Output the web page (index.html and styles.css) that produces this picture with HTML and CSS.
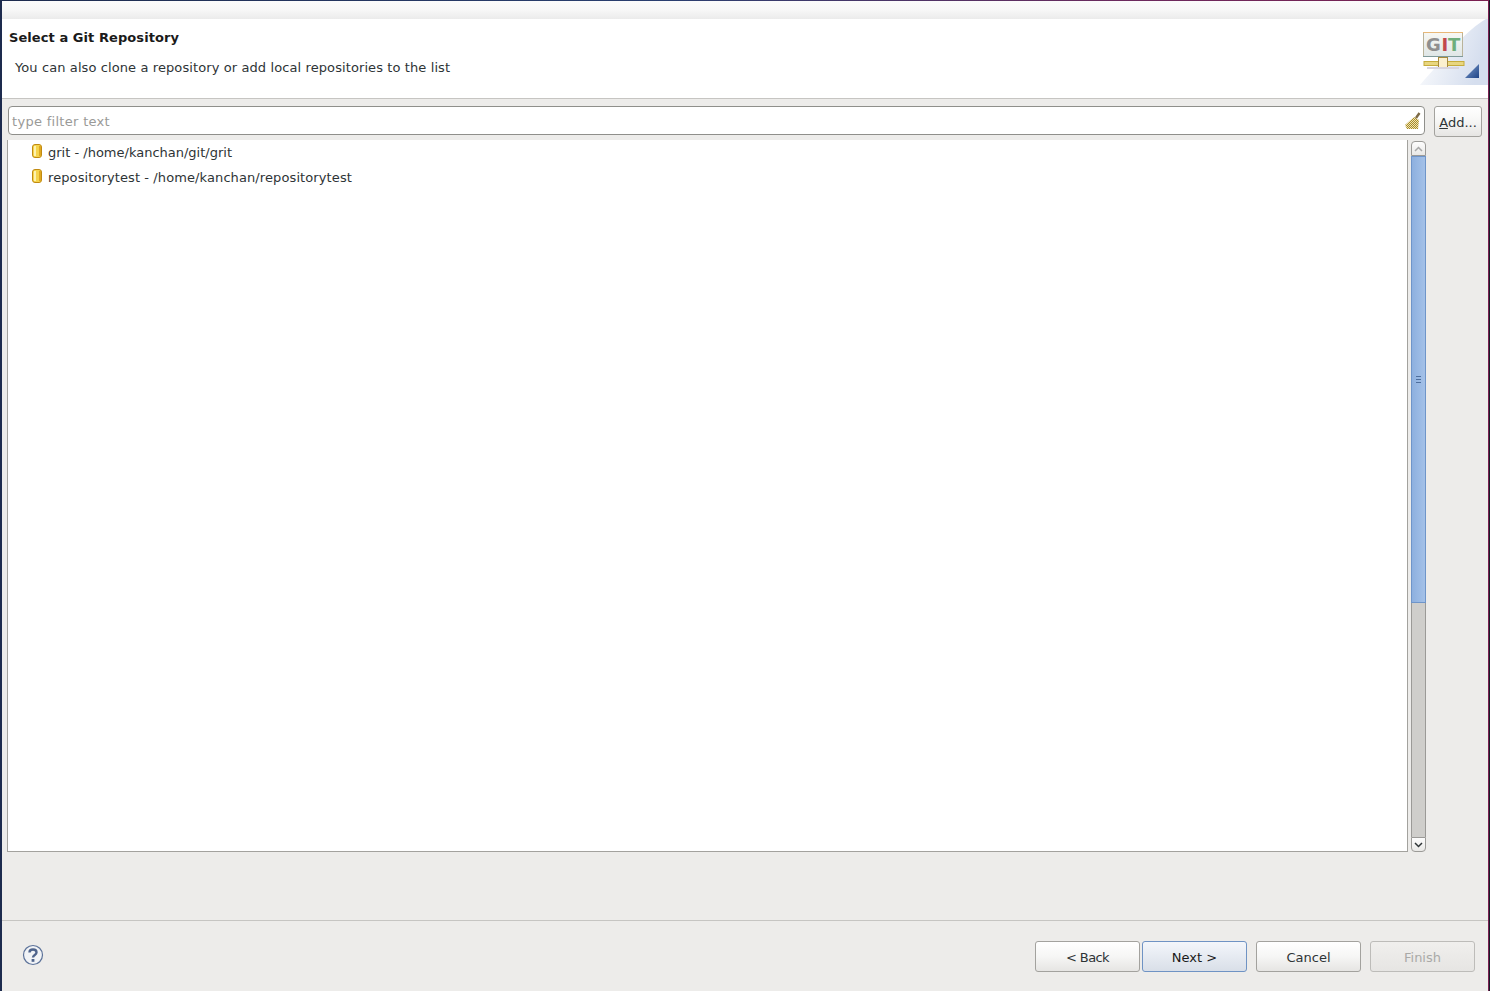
FILE: index.html
```html
<!DOCTYPE html>
<html lang="en">
<head>
<meta charset="utf-8">
<title>Select a Git Repository</title>
<link rel="stylesheet" href="styles.css">
</head>
<body>
<div class="window">
  <div class="strip"></div>
  <header class="banner">
    <div class="banner-text">
      <h1 class="title">Select a Git Repository</h1>
      <p class="subtitle">You can also clone a repository or add local repositories to the list</p>
    </div>
    <div class="banner-art">
      <svg class="art-svg" width="90" height="66" viewBox="0 0 90 66">
        <defs>
          <linearGradient id="wash" x1="0" y1="0" x2="1" y2="0.3">
            <stop offset="0" stop-color="#ffffff"/>
            <stop offset="1" stop-color="#d5deee"/>
          </linearGradient>
          <linearGradient id="tri" x1="0" y1="0" x2="1" y2="1">
            <stop offset="0" stop-color="#7f9fce"/>
            <stop offset="1" stop-color="#1f4487"/>
          </linearGradient>
          <linearGradient id="panel" x1="0" y1="0" x2="0" y2="1">
            <stop offset="0" stop-color="#f8f8f4"/>
            <stop offset="1" stop-color="#dfe6e6"/>
          </linearGradient>
        </defs>
        <path d="M90 0 L88 0 C70 10 50 34 22 66 L90 66 Z" fill="url(#wash)"/>
        <rect x="25.500" y="13.500" width="39" height="24" fill="url(#panel)" stroke="#b9b39a"/>
        <path d="M25 13.500 H65" stroke="#e8b878" fill="none"/>
        <path d="M25 37.500 H65" stroke="#7f9a9a" fill="none"/>
        <text class="git-letter git-g" x="28" y="32">G</text>
        <text class="git-letter git-i" x="43.500" y="32">I</text>
        <text class="git-letter git-t" x="50" y="32">T</text>
        <rect x="26" y="42.500" width="40" height="4" fill="#e8d680" stroke="#c6ac3c" stroke-width="1"/>
        <rect x="40.500" y="38.500" width="9" height="10" fill="#fbf0cf" stroke="#a78a3d"/>
        <rect x="29" y="48" width="32" height="2" fill="#d8d4de"/>
        <path d="M67 59 L81 59 L81 45 Z" fill="url(#tri)"/>
      </svg>
    </div>
  </header>
  <main class="content">
    <div class="filter-row">
      <div class="filter">
        <span class="filter-text">type filter text</span>
        <svg class="broom" width="16" height="18" viewBox="0 0 16 18">
          <defs>
            <pattern id="dither" width="2" height="2" patternUnits="userSpaceOnUse">
              <rect width="2" height="2" fill="#f2e6b0"/>
              <rect width="1" height="1" fill="#a68a2c"/>
              <rect x="1" y="1" width="1" height="1" fill="#a68a2c"/>
            </pattern>
          </defs>
          <path d="M0 13 L9 5 L14 8 L13 17 L2 17 Z" fill="url(#dither)"/>
          <path d="M11 6 L14.500 1" stroke="#7d6a45" stroke-width="2.400" fill="none"/>
        </svg>
      </div>
      <button class="btn add-btn"><u>A</u>dd...</button>
    </div>
    <div class="list-row">
      <ul class="tree">
        <li class="tree-item">
          <svg class="repo" width="10" height="14" viewBox="0 0 10 14"><rect x="0.500" y="0.500" width="9" height="13" rx="2.500" fill="#f5d44c" stroke="#c08a12"/><rect x="2" y="2" width="2" height="10" fill="#fdf2b0"/><rect x="7" y="2" width="2" height="10" fill="#e0a820"/></svg>
          <span class="label-short">grit - /home/kanchan/git/grit</span>
        </li>
        <li class="tree-item">
          <svg class="repo" width="10" height="14" viewBox="0 0 10 14"><rect x="0.500" y="0.500" width="9" height="13" rx="2.500" fill="#f5d44c" stroke="#c08a12"/><rect x="2" y="2" width="2" height="10" fill="#fdf2b0"/><rect x="7" y="2" width="2" height="10" fill="#e0a820"/></svg>
          <span class="label-long">repositorytest - /home/kanchan/repositorytest</span>
        </li>
      </ul>
      <div class="scrollbar">
        <div class="arrow arrow-up">
          <svg width="9" height="6" viewBox="0 0 9 6"><path d="M1 5 L4.500 1.500 L8 5" fill="none" stroke="#a8a8a8" stroke-width="1.500"/></svg>
        </div>
        <div class="thumb"><span class="grip"></span></div>
        <div class="track"></div>
        <div class="arrow arrow-down">
          <svg width="9" height="6" viewBox="0 0 9 6"><path d="M1 1 L4.500 4.500 L8 1" fill="none" stroke="#2e3436" stroke-width="1.500"/></svg>
        </div>
      </div>
    </div>
  </main>
  <footer class="footer">
    <svg class="help" width="22" height="22" viewBox="0 0 22 22">
      <circle cx="11" cy="11" r="9.500" fill="#f1f3f6" stroke="#5c7299" stroke-width="1.200"/>
      <path d="M7.500 8.500 C7.500 4.500 14.500 4.500 14.500 8.500 C14.500 11 11 11 11 13.500" fill="none" stroke="#4f648c" stroke-width="2.400"/>
      <rect x="9.600" y="15" width="2.800" height="2.800" fill="#4f648c"/>
    </svg>
    <div class="actions">
      <div class="nav-pair">
        <button class="btn wide back">&lt; Back</button>
        <button class="btn wide default">Next &gt;</button>
      </div>
      <button class="btn wide">Cancel</button>
      <button class="btn wide disabled">Finish</button>
    </div>
  </footer>
</div>
</body>
</html>
```

FILE: styles.css
```css
* { box-sizing: border-box; }
html, body { margin: 0; padding: 0; height: 100%; }
body {
  background: #1d2b4e;
  font-family: "DejaVu Sans", sans-serif;
  font-size: 13px;
  color: #2e3436;
  overflow: hidden;
}
.window {
  width: 1490px;
  height: 991px;
  display: flex;
  flex-direction: column;
  padding: 1px 1px 0 2px;
  background: linear-gradient(90deg, #1d2b4e 0%, #2a3f70 45%, #6b2a5e 75%, #7a1f50 100%);
  border-right: 1px solid #1a1a2a;
}
.strip {
  height: 18px;
  flex: none;
  background: linear-gradient(#fbfbfb, #f7f7f7 50%, #ebebeb);
}
.banner {
  height: 80px;
  flex: none;
  background: #fff;
  border-bottom: 1px solid #c6c5c2;
  display: flex;
  justify-content: space-between;
  position: relative;
}
.banner-text { padding: 11px 0 0 7px; }
.title {
  margin: 0;
  font-size: 13px;
  line-height: 16px;
  font-weight: bold;
  color: #1a1a1a;
  letter-spacing: 0.07px;
}
.subtitle {
  margin: 14px 0 0 6px;
  font-size: 13px;
  line-height: 16px;
  color: #2e3436;
  letter-spacing: 0.1px;
}
.banner-art { width: 90px; height: 66px; flex: none; }
.art-svg { display: block; }
.git-letter {
  font-family: "DejaVu Sans", sans-serif;
  font-weight: bold;
  font-size: 18px;
}
.git-g { fill: #8f8f8f; }
.git-i { fill: #c2484c; }
.git-t { fill: #6fae7c; }
.content {
  flex: 1;
  background: #edecea;
  display: flex;
  flex-direction: column;
  min-height: 0;
  padding: 7px 6px 68px 5px;
}
.filter-row { display: flex; gap: 9px; height: 29px; flex: none; }
.filter {
  flex: 1;
  background: #fff;
  border: 1px solid #8f8f8b;
  border-radius: 4px;
  display: flex;
  align-items: center;
  justify-content: space-between;
  padding: 0 3px 0 3px;
  margin-left: 1px;
}
.filter-text { color: #9a9a98; letter-spacing: 0.3px; padding-top: 2px; }
.broom { display: block; }
.btn {
  font-family: "DejaVu Sans", sans-serif;
  font-size: 13px;
  color: #2e3436;
  border: 1px solid #a3a29e;
  border-radius: 3px;
  background: linear-gradient(#ffffff, #f6f6f5 50%, #e6e5e3);
  padding: 1px 0 0;
}
.add-btn { width: 48px; height: 31px; }
.list-row { flex: 1; display: flex; min-height: 0; margin-top: 5px; }
.tree {
  width: 1401px;
  flex: none;
  margin: 0;
  padding: 0;
  list-style: none;
  background: #fff;
  border: 1px solid #a3a29e;
  border-top: 0;
}
.tree-item {
  height: 25px;
  display: flex;
  align-items: center;
  gap: 6px;
  padding-left: 24px;
  color: #2e3436;
}
.label-short { letter-spacing: 0; }
.label-long { letter-spacing: 0.1px; }
.repo { display: block; margin-top: -4px; }
.scrollbar {
  width: 15px;
  margin-left: 3px;
  display: flex;
  flex-direction: column;
}
.arrow {
  height: 15px;
  flex: none;
  border: 1px solid #9b9a97;
  background: linear-gradient(#fdfdfd, #e9e8e6);
  display: flex;
  align-items: center;
  justify-content: center;
}
.arrow-up { border-radius: 4px 4px 0 0; margin-top: 1px; }
.arrow-down { border-radius: 0 0 4px 4px; }
.thumb {
  height: 447px;
  flex: none;
  background: linear-gradient(90deg, #8db0df, #a4c1e8);
  border: 1px solid #6f95c9;
  display: flex;
  align-items: center;
  justify-content: center;
}
.grip {
  width: 5px;
  height: 7px;
  border-top: 1px solid #4e6f9e;
  border-bottom: 1px solid #4e6f9e;
  background: linear-gradient(#4e6f9e, #4e6f9e) center / 100% 1px no-repeat;
}
.track {
  flex: 1;
  background: #cfcecb;
  border-left: 1px solid #9b9a97;
  border-right: 1px solid #9b9a97;
}
.footer {
  height: 71px;
  flex: none;
  background: #edecea;
  border-top: 1px solid #c6c5c2;
  display: flex;
  align-items: flex-start;
  justify-content: space-between;
  padding: 20px 13px 0 20px;
}
.help { display: block; margin-top: 3px; }
.actions { display: flex; gap: 9px; }
.nav-pair { display: flex; gap: 2px; }
.btn.wide { width: 105px; height: 31px; }
.btn.back { letter-spacing: -0.6px; }
.default {
  border-color: #6f93c4;
  background: linear-gradient(#f3f6fb, #d9dfe8);
  color: #1a1a1a;
}
.disabled {
  color: #a9a9a7;
  border-color: #bdbcb9;
  background: linear-gradient(#f0efed, #e6e5e3);
}
```
